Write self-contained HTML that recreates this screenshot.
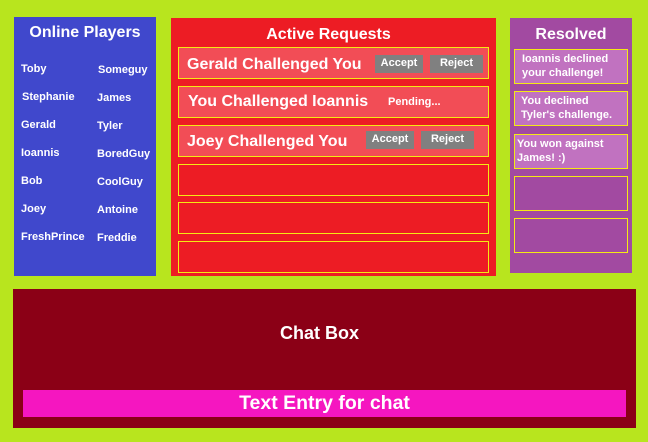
<!DOCTYPE html>
<html><head><style>
*{margin:0;padding:0;box-sizing:border-box}
body{width:648px;height:442px;background:#b8e51e;position:relative;overflow:hidden;font-family:"Liberation Sans",Arial,sans-serif;font-weight:bold;color:#fff}
div{position:absolute}
.t{white-space:nowrap}
.row{left:178px;width:311px;height:32px;border:1px solid #f5ea14}
.f{background:#f24d56}
.btn{background:#808080;font-size:11px;text-align:center;line-height:17px;height:18px}
.rb{left:514px;width:114px;height:35px;border:1px solid #f5ea14;font-size:11px;line-height:14px;padding:2px 0 0 7px}
.rf{background:#c172c0}
.n{font-size:11px}
</style></head><body>
<div style="left:14px;top:17px;width:142px;height:259px;background:#4048cc"></div>
<div class="t" style="left:14px;top:24px;width:142px;text-align:center;font-size:16px">Online Players</div>
<div class="n t" style="left:21px;top:63px">Toby</div>
<div class="n t" style="left:22px;top:91px">Stephanie</div>
<div class="n t" style="left:21px;top:119px">Gerald</div>
<div class="n t" style="left:21px;top:147px">Ioannis</div>
<div class="n t" style="left:21px;top:175px">Bob</div>
<div class="n t" style="left:21px;top:203px">Joey</div>
<div class="n t" style="left:21px;top:231px">FreshPrince</div>
<div class="n t" style="left:98px;top:64px">Someguy</div>
<div class="n t" style="left:97px;top:92px">James</div>
<div class="n t" style="left:97px;top:120px">Tyler</div>
<div class="n t" style="left:97px;top:148px">BoredGuy</div>
<div class="n t" style="left:97px;top:176px">CoolGuy</div>
<div class="n t" style="left:97px;top:204px">Antoine</div>
<div class="n t" style="left:97px;top:232px">Freddie</div>

<div style="left:171px;top:18px;width:325px;height:258px;background:#ed1c24"></div>
<div class="t" style="left:171px;top:26px;width:315px;text-align:center;font-size:16px">Active Requests</div>
<div class="row f" style="top:47px"></div>
<div class="t" style="left:187px;top:56px;font-size:16px">Gerald Challenged You</div>
<div class="btn" style="left:375px;top:55px;width:48px">Accept</div>
<div class="btn" style="left:430px;top:55px;width:53px">Reject</div>
<div class="row f" style="top:86px"></div>
<div class="t" style="left:188px;top:93px;font-size:16px">You Challenged Ioannis</div>
<div class="t" style="left:388px;top:96px;font-size:11px">Pending...</div>
<div class="row f" style="top:125px"></div>
<div class="t" style="left:187px;top:133px;font-size:16px">Joey Challenged You</div>
<div class="btn" style="left:366px;top:131px;width:48px">Accept</div>
<div class="btn" style="left:421px;top:131px;width:53px">Reject</div>
<div class="row" style="top:164px"></div>
<div class="row" style="top:202px"></div>
<div class="row" style="top:241px"></div>

<div style="left:510px;top:18px;width:122px;height:255px;background:#a24aa1"></div>
<div class="t" style="left:510px;top:26px;width:122px;text-align:center;font-size:16px">Resolved</div>
<div class="rb rf" style="top:49px">Ioannis declined<br>your challenge!</div>
<div class="rb rf" style="top:91px;padding-left:6px">You declined<br>Tyler's challenge.</div>
<div class="rb rf" style="top:134px;padding-left:2px">You won against<br>James! :)</div>
<div class="rb" style="top:176px"></div>
<div class="rb" style="top:218px"></div>

<div style="left:13px;top:289px;width:623px;height:139px;background:#8b0016"></div>
<div class="t" style="left:13px;top:323px;width:613px;text-align:center;font-size:18px">Chat Box</div>
<div style="left:23px;top:390px;width:603px;height:27px;background:#f516c0;text-align:center;font-size:19.5px;line-height:27px">Text Entry for chat</div>
</body></html>
